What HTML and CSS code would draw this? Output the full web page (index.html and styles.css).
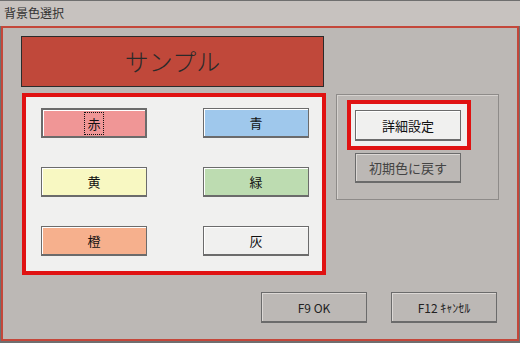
FILE: index.html
```html
<!DOCTYPE html>
<html lang="ja">
<head>
  <meta charset="UTF-8">
  <title>背景色選択</title>
  <link rel="stylesheet" href="styles.css">
</head>
<body>

  <div class="titlebar">背景色選択</div>

  <div class="frame">
    <div class="sample">サンプル</div>

    <div class="middle">
      <!-- color buttons -->
      <div class="colors">
        <button class="btn default red"><span class="focus">赤</span></button>
        <button class="btn blue">青</button>
        <button class="btn yellow">黄</button>
        <button class="btn green">緑</button>
        <button class="btn orange">橙</button>
        <button class="btn gray">灰</button>
      </div>

      <!-- detail group -->
      <div class="group">
        <div class="mark">
          <button class="btn light">詳細設定</button>
        </div>
        <button class="btn plain reset">初期色に戻す</button>
      </div>
    </div>

    <div class="footer">
      <button class="btn plain small">F9 OK</button>
      <button class="btn plain small">F12 ｷｬﾝｾﾙ</button>
    </div>
  </div>

</body>
</html>
```

FILE: styles.css
```css
body {
  margin: 0;
  width: 520px;
  height: 343px;
  background: #6f6f6f;
  font-family: "Noto Sans CJK JP", "Noto Sans", sans-serif;
  color: #222;
  overflow: hidden;
}

.titlebar {
  height: 25px;
  margin-top: 1px;
  background: #c7c2bf;
  font-size: 12px;
  line-height: 24px;
  padding-left: 4px;
  color: #333;
}

.frame {
  margin-left: 1px;
  width: 514px;
  height: 311px;
  border: 2px solid #c4473a;
  background: #bcb8b5;
  display: flex;
  flex-direction: column;
}

.sample {
  margin: 8px 0 0 18px;
  width: 301px;
  height: 49px;
  border: 1px solid #2b2b2b;
  background: #c0483a;
  color: #2a2a2a;
  font-size: 24px;
  font-weight: 300;
  line-height: 48px;
  text-align: center;
}

.middle {
  display: flex;
  align-items: flex-start;
  margin: 6px 0 0 19px;
}

.colors {
  width: 268px;
  height: 163px;
  padding: 11px 13px 0 15px;
  border: 4px solid #e01212;
  background: #f0f0ef;
  display: grid;
  grid-template-columns: 106px 106px;
  grid-template-rows: 30px 30px 30px;
  column-gap: 56px;
  row-gap: 29px;
  align-content: start;
}

.btn {
  box-sizing: border-box;
  width: 106px;
  height: 30px;
  border: 1px solid #6b6b6b;
  border-bottom-width: 2px;
  box-shadow: inset 1px 1px 0 #fff;
  font-family: "Noto Sans CJK JP", "Noto Sans", sans-serif;
  font-size: 13px;
  font-weight: 400;
  color: #111;
  padding: 0;
}

.btn.default {
  border-width: 2px;
}

.focus {
  outline: 1px dotted #111;
  outline-offset: 1px;
  padding: 0 1px;
}

.red { background: #f09696; }
.blue { background: #9fc8ec; }
.yellow { background: #f8f8c2; }
.green { background: #bddcb1; }
.orange { background: #f6b08d; }
.gray { background: #f0f0ef; }
.light { background: #f0f0ef; }

.group {
  margin: 1px 0 0 10px;
  width: 161px;
  height: 104px;
  border: 1px solid #8e8b89;
  box-shadow: inset 1px 1px 0 #d6d2cf;
  display: flex;
  flex-direction: column;
  align-items: flex-start;
}

.mark {
  margin: 5px 0 0 10px;
  border: 4px solid #e01212;
  background: #f0f0ef;
  padding: 6px 6px 5px 4px;
  display: flex;
}

.btn.light {
  height: 31px;
}

.btn.plain {
  background: #bcb8b5;
  box-shadow: inset 1px 1px 0 #dcd8d5;
}

.reset {
  margin: 3px 0 0 18px;
  color: #444;
}

.footer {
  display: flex;
  justify-content: flex-end;
  gap: 24px;
  margin: 17px 20px 0 0;
}

.btn.small {
  height: 31px;
  font-size: 12px;
  color: #222;
}
```
